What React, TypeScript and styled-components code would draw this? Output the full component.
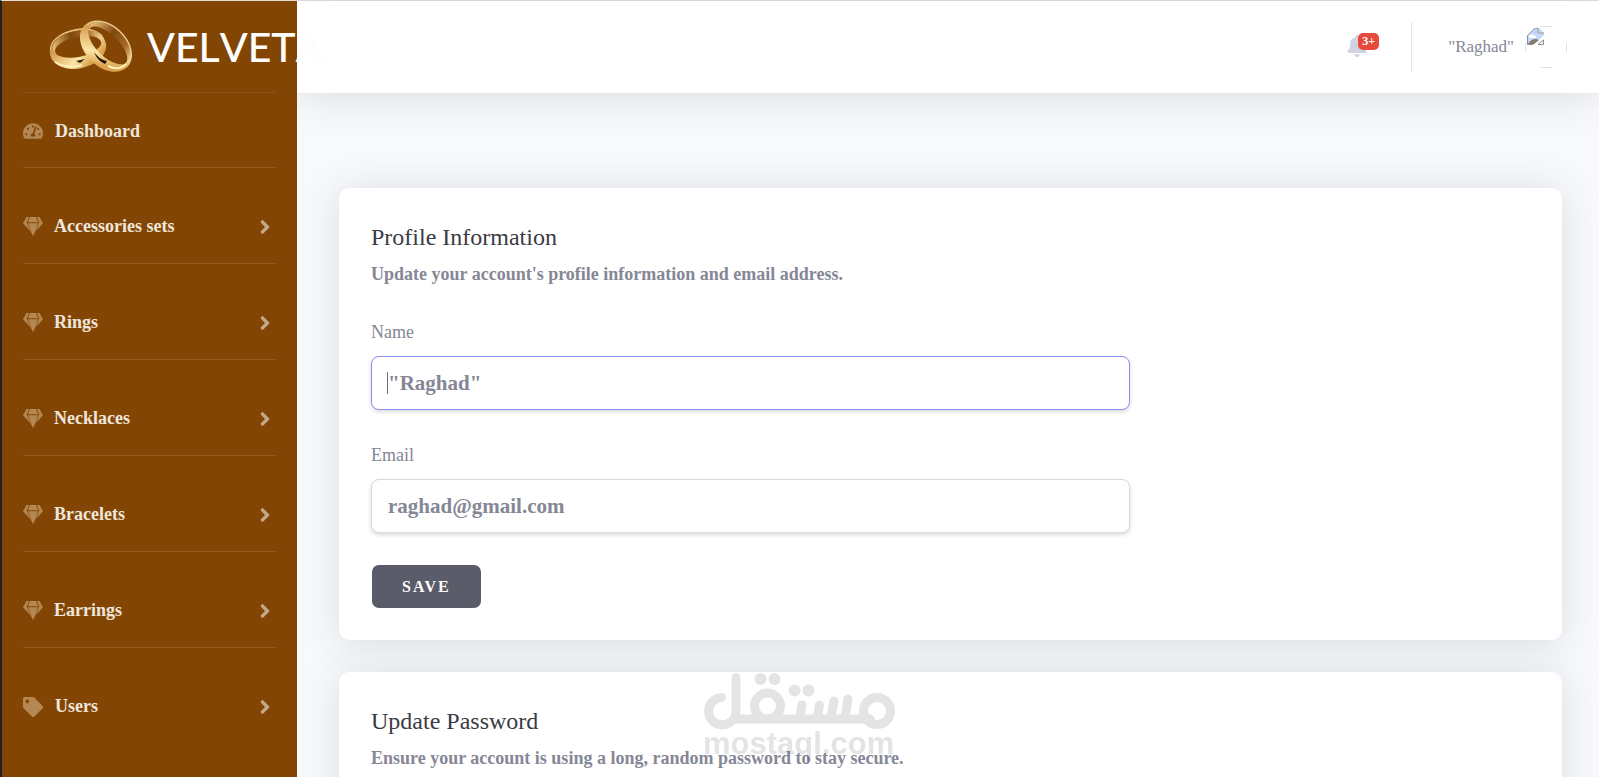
import React from "react";
import styled, { createGlobalStyle } from "styled-components";
import { FaAngleRight, FaBell, FaTag, FaTachometerAlt } from "react-icons/fa";

const serif = `"Liberation Serif", "Times New Roman", serif`;

const GlobalStyle = createGlobalStyle`
  *, *::before, *::after { box-sizing: border-box; }
  html, body { margin: 0; height: 100%; overflow: hidden; }
  #root { height: 100%; }
  body { font-family: ${serif}; color: #858796; background: #f8f9fc; }
`;

const Page = styled.div`
  display: flex;
  height: 100%;
  border-left: 2px solid #222;
  border-top: 1px solid #e6dfd9;
`;

const Sidebar = styled.aside`
  flex: 0 0 295px;
  min-width: 0;
  padding: 0 21px;
  background: #834503;
  position: relative;
  z-index: 2;
`;

const Brand = styled.a`
  display: flex;
  align-items: center;
  gap: 12px;
  height: 91px;
  padding-left: 26px;
  color: #fdfdfd;
  text-decoration: none;
  white-space: nowrap;
  font: 500 41px/1 Lato, sans-serif;
  font-kerning: none;
`;

const BrandMark = styled.svg`
  flex: none;
  width: 86px;
  height: 54px;
`;

const Menu = styled.ul`
  list-style: none;
  margin: 0;
  padding: 0;
`;

const MenuItem = styled.li<{ $first?: boolean }>`
  display: flex;
  height: ${(p) => (p.$first ? 75 : 96)}px;
  padding-top: ${(p) => (p.$first ? 2 : 22)}px;
  border-top: 1px solid ${(p) => (p.$first ? "#8d5217" : "#96581b")};
`;

const MenuLink = styled.a<{ $wide?: boolean }>`
  flex: 1;
  display: flex;
  align-items: center;
  gap: ${(p) => (p.$wide ? 12 : 11)}px;
  color: #efe6dc;
  text-decoration: none;
  font-size: 18px;
  font-weight: 700;
`;

const MenuIcon = styled.span`
  display: flex;
  color: #b38852;
`;

const MenuArrow = styled(FaAngleRight)`
  margin-left: auto;
  color: #c5a78a;
`;

const Main = styled.div`
  flex: 1;
  min-width: 0;
  display: flex;
  flex-direction: column;
`;

const Topbar = styled.header`
  flex: none;
  display: flex;
  align-items: center;
  justify-content: flex-end;
  height: 92px;
  padding-right: 32px;
  background: #fff;
  box-shadow: 0 3px 38px rgba(58, 59, 69, 0.15);
  z-index: 1;
`;

const Alerts = styled.button`
  position: relative;
  width: 34px;
  height: 24px;
  padding: 0;
  border: 0;
  background: none;
  color: #d1d3e2;
  text-align: left;
`;

const Badge = styled.span`
  position: absolute;
  top: -2px;
  left: 12px;
  width: 21px;
  height: 17px;
  border-radius: 5px;
  background: #e74a3b;
  color: #fff;
  font: 700 12px/17px ${serif};
  text-align: center;
`;

const TopDivider = styled.span`
  width: 1px;
  height: 50px;
  margin: 0 36px 0 31px;
  background: #e3e6f0;
`;

const UserLink = styled.a`
  display: flex;
  align-items: center;
  gap: 11px;
  color: #858796;
  font-size: 17px;
  text-decoration: none;
`;

const Avatar = styled.svg`
  width: 42px;
  height: 42px;
`;

const Content = styled.main`
  flex: 1;
  min-height: 0;
  padding: 95px 37px 0 42px;
  display: flex;
  flex-direction: column;
  gap: 32px;
`;

const Card = styled.section`
  flex: none;
  padding: 32px;
  border-radius: 10px;
  background: #fff;
  box-shadow: 0 3px 38px rgba(58, 59, 69, 0.15);
`;

const CardTitle = styled.h2`
  margin: 0;
  color: #3a3b45;
  font-size: 24px;
  line-height: 34px;
  font-weight: 400;
`;

const CardText = styled.p`
  margin: 7px 0 0;
  font-size: 18px;
  line-height: 27px;
  font-weight: 700;
`;

const Form = styled.form`
  display: flex;
  flex-direction: column;
  align-items: flex-start;
  gap: 32px;
  max-width: 759px;
  padding-top: 31px;
`;

const Field = styled.div`
  display: flex;
  flex-direction: column;
  gap: 11px;
  width: 100%;
`;

const Label = styled.label`
  font-size: 18px;
  line-height: 26px;
`;

const InputBox = styled.div<{ $active?: boolean }>`
  position: relative;

  &::after {
    content: "";
    display: ${(p) => (p.$active ? "block" : "none")};
    position: absolute;
    left: 16px;
    top: 16px;
    width: 1px;
    height: 22px;
    background: #6e707e;
  }
`;

const Input = styled.input<{ $active?: boolean }>`
  display: block;
  width: 100%;
  height: 54px;
  padding: 0 16px;
  border: 1px solid ${(p) => (p.$active ? "#8a8ef5" : "#d9dadf")};
  border-radius: 8px;
  outline: 0;
  background: #fff;
  color: #858796;
  box-shadow: 0 2px 4px rgba(0, 0, 0, 0.15);
  font: 700 21px/32px ${serif};
`;

const SaveButton = styled.button`
  height: 43px;
  padding: 0 30px;
  margin-left: 1px;
  border: 0;
  border-radius: 7px;
  background: #5a5c69;
  color: #fff;
  font: 700 16px/20px ${serif};
  letter-spacing: 2px;
`;

const Watermark = styled.svg`
  position: fixed;
  left: 50%;
  bottom: 12px;
  width: 200px;
  height: 96px;
  transform: translateX(-50%);
  mix-blend-mode: multiply;
  pointer-events: none;
  z-index: 3;
`;

const Gem = () => (
  <svg width="20" height="19" viewBox="0 0 20 19" fill="currentColor" aria-hidden="true">
    <path d="M3.600 0H6L3.800 5.800L7.600 14.500L0 6.200Z" />
    <path d="M16.400 0H14L16.200 5.800L12.400 14.500L20 6.200Z" />
    <path d="M7 0H13L15.200 5.200H4.800Z" />
    <path d="M4.900 6.200H15.100L11.600 16L10 19L8.400 16Z" />
  </svg>
);

const Rings = () => (
  <BrandMark viewBox="0 0 86 54" aria-hidden="true">
    <defs>
      <linearGradient id="band" x1="0" y1="0" x2="1" y2="1">
        <stop offset="0" stopColor="#9a6420" />
        <stop offset="0.3" stopColor="#dba759" />
        <stop offset="0.6" stopColor="#fbe5a6" />
        <stop offset="0.8" stopColor="#d9a04a" />
        <stop offset="1" stopColor="#e9bd6c" />
      </linearGradient>
      <linearGradient id="inside" x1="0" y1="0" x2="1" y2="0">
        <stop offset="0" stopColor="#e9c078" />
        <stop offset="0.4" stopColor="#80490f" />
        <stop offset="0.75" stopColor="#a86c28" />
        <stop offset="1" stopColor="#f5dc9d" />
      </linearGradient>
    </defs>
    <g transform="rotate(-12 29 29)">
      <path fillRule="evenodd" fill="url(#band)" d="M0.500 29a28.500 19.500 0 1 0 57 0a28.500 19.500 0 1 0 -57 0ZM4 24a25.500 13 0 1 0 51 0a25.500 13 0 1 0 -51 0Z" />
      <path fillRule="evenodd" fill="url(#inside)" d="M4 24a25.500 13 0 1 0 51 0a25.500 13 0 1 0 -51 0ZM6 27a23.500 10 0 1 0 47 0a23.500 10 0 1 0 -47 0Z" />
      <path d="M2 25a27 15.500 0 0 1 54 0" fill="none" stroke="#efd092" />
    </g>
    <path d="M6 42c8 5 17 6 27 3" fill="none" stroke="#fff0bd" strokeWidth="2" />
    <path d="M27 41l9-2-5 4z" fill="#342009" />
    <g transform="rotate(44 57 26)">
      <path fillRule="evenodd" fill="url(#band)" d="M27 26a30 21 0 1 0 60 0a30 21 0 1 0 -60 0ZM31 21a27 14.500 0 1 0 54 0a27 14.500 0 1 0 -54 0Z" />
      <path fillRule="evenodd" fill="url(#inside)" d="M31 21a27 14.500 0 1 0 54 0a27 14.500 0 1 0 -54 0ZM33 24.500a25 11 0 1 0 50 0a25 11 0 1 0 -50 0Z" />
      <path d="M29 24a28 18 0 0 1 56 0" fill="none" stroke="#f0d3a0" />
    </g>
    <path d="M45 32c3 4 7 8 13 9l-2 3c-6-3-9-7-11-12z" fill="#1e1208" />
    <path d="M59 46c6 3 13 3 18-2" fill="none" stroke="#fff0bd" strokeWidth="2" />
  </BrandMark>
);

const categories = ["Accessories sets", "Rings", "Necklaces", "Bracelets", "Earrings"];

export default function App() {
  return (
    <>
      <GlobalStyle />
      <Page>
        <Sidebar>
          <Brand href="#"><Rings />VELVETA</Brand>
          <Menu>
            <MenuItem $first>
              <MenuLink href="#" $wide>
                <MenuIcon><FaTachometerAlt size={20} /></MenuIcon>
                Dashboard
              </MenuLink>
            </MenuItem>
            {categories.map((name) => (
              <MenuItem key={name}>
                <MenuLink href="#">
                  <MenuIcon><Gem /></MenuIcon>
                  {name}
                  <MenuArrow size={22} />
                </MenuLink>
              </MenuItem>
            ))}
            <MenuItem>
              <MenuLink href="#" $wide>
                <MenuIcon><FaTag size={20} /></MenuIcon>
                Users
                <MenuArrow size={22} />
              </MenuLink>
            </MenuItem>
          </Menu>
        </Sidebar>
        <Main>
          <Topbar>
            <Alerts aria-label="Alerts"><FaBell size={22} /><Badge>3+</Badge></Alerts>
            <TopDivider />
            <UserLink href="#">
              "Raghad"
              <Avatar viewBox="0 0 42 42" aria-hidden="true">
                <path d="M15 .5h12M15 41.500h12M.5 17v9M41.500 17v9" stroke="#e2e2e6" />
                <path d="M2 10L9 3L14 2L19 7V9L8 19H2Z" fill="#c3d7f7" />
                <path d="M2 10L9 3L13 2V7H19" fill="none" stroke="#9a9aa6" />
                <path d="M4 10q2-3 4-1q3 0 3 3H4Z" fill="#fff" />
                <path d="M3 18q3-5 8-5l3 1-5 4Z" fill="#85776a" />
                <path d="M2.500 10V18.500H8M13 18.500H18.500V14Z" fill="none" stroke="#8d8d9c" />
              </Avatar>
            </UserLink>
          </Topbar>
          <Content>
            <Card>
              <CardTitle>Profile Information</CardTitle>
              <CardText>Update your account's profile information and email address.</CardText>
              <Form onSubmit={(e) => e.preventDefault()}>
                <Field>
                  <Label htmlFor="name">Name</Label>
                  <InputBox $active>
                    <Input id="name" $active defaultValue={'"Raghad"'} />
                  </InputBox>
                </Field>
                <Field>
                  <Label htmlFor="email">Email</Label>
                  <InputBox>
                    <Input id="email" type="email" defaultValue="raghad@gmail.com" />
                  </InputBox>
                </Field>
                <SaveButton type="submit">SAVE</SaveButton>
              </Form>
            </Card>
            <Card>
              <CardTitle>Update Password</CardTitle>
              <CardText>Ensure your account is using a long, random password to stay secure.</CardText>
            </Card>
          </Content>
        </Main>
        <Watermark viewBox="0 0 200 96" aria-hidden="true">
          <g fill="none" stroke="#e4e4e4" strokeWidth="9" strokeLinecap="round">
            <path d="M21.500 28.500A13.700 13.700 0 1 0 36 42V8.500M34 50H170" />
            <circle cx="177" cy="42" r="13.500" />
            <circle cx="67.500" cy="37" r="13" />
            <path d="M102 36L100 48M119.500 36L117.500 48M134 32L131 48M148 30L145 48" />
          </g>
          <g fill="#e4e4e4">
            <circle cx="60.500" cy="10" r="6" />
            <circle cx="74.500" cy="10" r="6" />
            <circle cx="94.500" cy="21.500" r="6" />
            <circle cx="108.500" cy="21.500" r="6" />
            <text x="3" y="85" fontFamily="Liberation Sans, Arial, sans-serif" fontWeight="700" fontSize="31">mostaql.com</text>
          </g>
        </Watermark>
      </Page>
    </>
  );
}
